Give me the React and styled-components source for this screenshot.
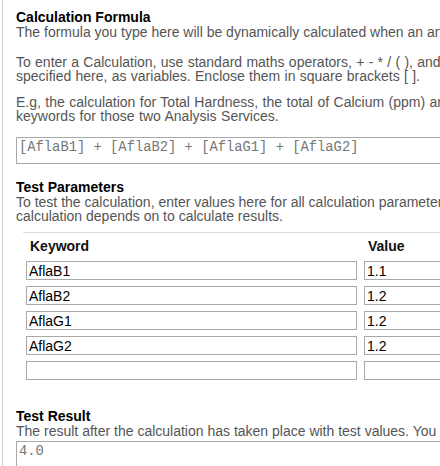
import React from "react";
import styled, { createGlobalStyle } from "styled-components";

const Global = createGlobalStyle`
  html, body { margin: 0; padding: 0; background: #fff; overflow: hidden; }
  body { font-family: "Liberation Sans", Arial, sans-serif; }
`;

const Page = styled.div`
  margin-left: 2px;
  border-left: 1px solid #cfcfcf;
  padding: 10px 0 0 13px;
  min-height: 466px;
  width: 800px;
  box-sizing: border-box;
`;

const Section = styled.section`
  margin-top: ${(p) => p.$mt || 0}px;
`;

const Heading = styled.h3`
  margin: 0;
  font-size: 14px;
  line-height: 15px;
  font-weight: bold;
  color: #000;
`;

const Para = styled.p`
  margin: 0 0 ${(p) => p.$mb ?? 14}px 0;
  font-size: 14px;
  line-height: 14px;
  color: #555;
  white-space: nowrap;
  word-spacing: ${(p) => p.$ws || 0}px;
`;

const Code = styled.div`
  width: 700px;
  height: ${(p) => p.$h || 27}px;
  box-sizing: border-box;
  border: 1px solid #a9a9a9;
  padding: 3px 2px;
  font-family: "Liberation Mono", "Courier New", monospace;
  font-size: 13.8px;
  line-height: 14px;
  color: #777;
  white-space: nowrap;
`;

const Table = styled.table`
  margin-left: 7px;
  border-collapse: separate;
  border-spacing: 0;
  border-top: 1px solid #dedede;
  table-layout: fixed;
  width: 700px;
`;

const Col = styled.col`
  width: ${(p) => p.$w}px;
`;

const Th = styled.th`
  text-align: left;
  font-size: 14px;
  font-weight: bold;
  color: #111;
  padding: 5px 0 4px ${(p) => p.$pl}px;
  line-height: 16px;
`;

const Td = styled.td`
  padding: 3px 0 3px ${(p) => p.$pl}px;
`;

const Input = styled.input`
  display: block;
  box-sizing: border-box;
  width: ${(p) => p.$w}px;
  height: 19px;
  margin: 0;
  border: 1px solid #a9a9a9;
  padding: 0 2px;
  font-family: "Liberation Sans", Arial, sans-serif;
  font-size: 14px;
  color: #000;
  outline: none;
  background: #fff;
`;

const rows = [
  ["AflaB1", "1.1"],
  ["AflaB2", "1.2"],
  ["AflaG1", "1.2"],
  ["AflaG2", "1.2"],
  ["", ""],
];

export default function App() {
  return (
    <>
      <Global />
      <Page>
        <Section>
          <Heading>Calculation Formula</Heading>
          <Para $mb={16}>
            The formula you type here will be dynamically calculated when an analysis result is entered.
          </Para>
          <Para $mb={12} $ws={0.4}>
            To enter a Calculation, use standard maths operators, + - * / ( ), and all keywords available, both from other Analysis Services and the Interim Fields
            <br />
            specified here, as variables. Enclose them in square brackets [ ].
          </Para>
          <Para $mb={14} $ws={0.55}>
            E.g, the calculation for Total Hardness, the total of Calcium (ppm) and Magnesium (ppm) ions in water, is entered as [Ca] + [Mg], where Ca and MG are the
            <br />
            keywords for those two Analysis Services.
          </Para>
          <Code>[AflaB1] + [AflaB2] + [AflaG1] + [AflaG2]</Code>
        </Section>
        <Section $mt={16}>
          <Heading>Test Parameters</Heading>
          <Para $mb={9}>
            To test the calculation, enter values here for all calculation parameters. This includes Interim fields defined above, as well as any services that this
            <br />
            calculation depends on to calculate results.
          </Para>
          <Table>
            <colgroup>
              <Col $w={334} />
              <Col />
            </colgroup>
            <thead>
              <tr>
                <Th $pl={7}>Keyword</Th>
                <Th $pl={11}>Value</Th>
              </tr>
            </thead>
            <tbody>
              {rows.map(([k, v], i) => (
                <tr key={i}>
                  <Td $pl={3}>
                    <Input $w={331} defaultValue={k} />
                  </Td>
                  <Td $pl={7}>
                    <Input $w={200} defaultValue={v} />
                  </Td>
                </tr>
              ))}
            </tbody>
          </Table>
        </Section>
        <Section $mt={26}>
          <Heading>Test Result</Heading>
          <Para $mb={3}>
            The result after the calculation has taken place with test values. You will need to save the calculation before testing it.
          </Para>
          <Code $h={40}>4.0</Code>
        </Section>
      </Page>
    </>
  );
}
